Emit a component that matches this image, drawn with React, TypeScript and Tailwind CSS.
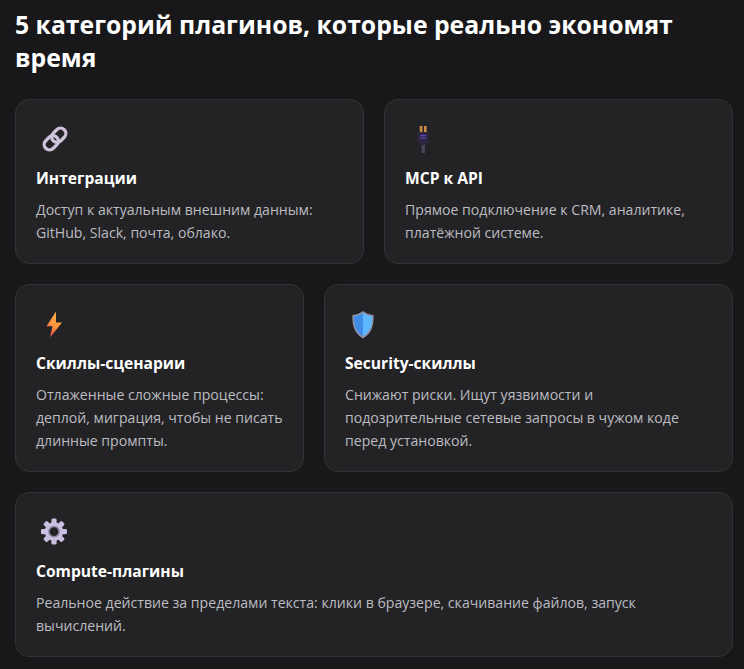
import React from "react";

const LinkIcon = () => (
  <svg width="30" height="30" viewBox="0 0 30 30" fill="none">
    <g transform="translate(16 15) scale(0.97) rotate(-45) translate(-15 -15)" stroke="#cfc3dc" strokeWidth="3.4">
      <rect x="1.5" y="9.5" width="16" height="11" rx="5.5" />
      <rect x="12.5" y="9.5" width="16" height="11" rx="5.5" />
    </g>
  </svg>
);

const PlugIcon = () => (
  <svg width="30" height="30" viewBox="0 0 30 30" fill="none">
    <rect x="11.8" y="2" width="2.6" height="6" fill="#c98f45" />
    <rect x="16" y="2" width="2.6" height="6" fill="#c98f45" />
    <path d="M9.3 8h11.4v8c0 2.5-1.6 4.2-3.2 5h-5c-1.6-.8-3.2-2.5-3.2-5z" fill="#2d2840" />
    <rect x="12.4" y="11" width="5.4" height="1.2" fill="#6b46c9" />
    <rect x="12.4" y="13.4" width="5.4" height="1.2" fill="#6b46c9" />
    <rect x="13.6" y="21" width="3.4" height="8" fill="#4a4458" />
  </svg>
);

const BoltIcon = () => (
  <svg width="30" height="30" viewBox="0 0 30 30">
    <defs>
      <linearGradient id="bolt" x1="0.7" y1="0" x2="0.3" y2="1">
        <stop offset="0" stopColor="#ffb24a" />
        <stop offset="0.55" stopColor="#fb923c" />
        <stop offset="1" stopColor="#e5484d" />
      </linearGradient>
    </defs>
    <path d="M17 2.5 L7.5 17.2 H13.4 L11 28.5 L23 13.5 H17 Z" fill="url(#bolt)" />
  </svg>
);

const ShieldIcon = () => (
  <svg width="30" height="30" viewBox="0 0 30 30">
    <path d="M15 2 C18 4.5 21 5.5 25.5 6 C26 15 24.5 24 15 29.5 C5.5 24 4 15 4.5 6 C9 5.5 12 4.5 15 2 Z" fill="#8f93a6" />
    <path d="M15 4 V27.3 C7.5 23 5.7 15 6 7.3 C10 6.8 12.5 5.8 15 4 Z" fill="#3f8de8" />
    <path d="M15 4 V27.3 C22.5 23 24.3 15 24 7.3 C20 6.8 17.5 5.8 15 4 Z" fill="#5fb8ff" />
  </svg>
);

const GearIcon = () => (
  <svg width="30" height="30" viewBox="0 0 30 30">
    <g transform="translate(15 14.6) scale(0.93) translate(-15 -15)">
      <g fill="#cabfe0">
        {[0, 45, 90, 135, 180, 225, 270, 315].map((a) => (
          <rect key={a} x="12.2" y="1" width="5.6" height="8" rx="1.6" transform={`rotate(${a} 15 15)`} />
        ))}
        <circle cx="15" cy="15" r="10" />
      </g>
      <circle cx="15" cy="15" r="6.4" fill="#8f86a5" />
      <circle cx="15" cy="15" r="4.6" fill="#232326" />
    </g>
  </svg>
);

type CardProps = { icon: React.ReactNode; title: string; text: React.ReactNode; className?: string };

const Card = ({ icon, title, text, className }: CardProps) => (
  <div className={`rounded-[14px] border border-[#323236] bg-[#232326] px-5 pb-[19px] pt-5 ${className ?? ""}`}>
    <div className="mb-[9px] ml-[3px] flex h-[38px] items-center">{icon}</div>
    <h3 className="mb-2 text-[15.6px] font-bold leading-[22.6px] text-[#ffffff]">{title}</h3>
    <p className="text-[14.1px] leading-[23.2px] text-[#bcbcc0]">{text}</p>
  </div>
);

export default function App() {
  return (
    <div className="h-[669px] w-[744px] overflow-hidden bg-[#18181a] pl-[15px] pr-[11px] pt-[8px] font-['Open_Sans','Noto_Sans',sans-serif]">
      <h2 className="mb-[25px] text-[24.75px] font-bold leading-[33px] text-[#ffffff]">
        5 категорий плагинов, которые реально экономят время
      </h2>
      <div className="flex flex-col gap-5">
        <div className="flex gap-5">
          <Card
            className="flex-1"
            icon={<LinkIcon />}
            title="Интеграции"
            text="Доступ к актуальным внешним данным: GitHub, Slack, почта, облако."
          />
          <Card
            className="flex-1"
            icon={<PlugIcon />}
            title="MCP к API"
            text="Прямое подключение к CRM, аналитике, платёжной системе."
          />
        </div>
        <div className="flex gap-5">
          <Card
            className="w-[289px] shrink-0"
            icon={<BoltIcon />}
            title="Скиллы-сценарии"
            text="Отлаженные сложные процессы: деплой, миграция, чтобы не писать длинные промпты."
          />
          <Card
            className="flex-1"
            icon={<ShieldIcon />}
            title="Security-скиллы"
            text="Снижают риски. Ищут уязвимости и подозрительные сетевые запросы в чужом коде перед установкой."
          />
        </div>
        <Card
          icon={<GearIcon />}
          title="Compute-плагины"
          text="Реальное действие за пределами текста: клики в браузере, скачивание файлов, запуск вычислений."
        />
      </div>
    </div>
  );
}
